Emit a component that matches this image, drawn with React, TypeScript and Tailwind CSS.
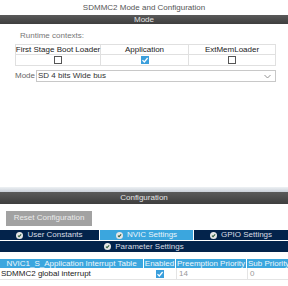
import React from 'react';

const CheckBox = ({ checked }: { checked?: boolean }) =>
  checked ? (
    <svg width="8" height="8" viewBox="0 0 8 8">
      <rect x="0" y="0" width="8" height="8" fill="#3b9fdc" />
      <path d="M1.5 4.2 L3.3 6 L6.6 2" fill="none" stroke="#fff" strokeWidth="1.2" />
    </svg>
  ) : (
    <svg width="8" height="8" viewBox="0 0 8 8">
      <rect x="0.5" y="0.5" width="7" height="7" fill="#fff" stroke="#555" strokeWidth="1" />
    </svg>
  );

const TabIcon = () => (
  <svg width="7" height="7" viewBox="0 0 8 8" className="mr-[4px] shrink-0">
    <circle cx="4" cy="4" r="4" fill="#e6e6e6" />
    <path d="M2.2 4.1 L3.5 5.4 L5.9 2.8" fill="none" stroke="#2f5d3a" strokeWidth="1.2" />
  </svg>
);

const Tab = ({ label, active, className = '' }: { label: string; active?: boolean; className?: string }) => (
  <div
    className={
      'flex items-center justify-center h-[10px] whitespace-nowrap ' +
      (active ? 'bg-[#3ba6de] text-[#e8f4fb] ' : 'bg-[#03234b] text-[#d8dde4] ') +
      className
    }
  >
    <TabIcon />
    {label}
  </div>
);

export default function App() {
  return (
    <div className="w-[288px] h-[286px] bg-white overflow-hidden flex flex-col font-['Liberation_Sans',Arial,sans-serif] text-[8px] leading-none whitespace-nowrap">
      {/* title */}
      <div className="h-[15px] flex items-center justify-center text-[#555]">SDMMC2 Mode and Configuration</div>
      <div className="h-[9px] bg-gradient-to-b from-[#5a5a5a] to-[#3e3e3e] text-[#e4e4e4] flex items-center justify-center">
        Mode
      </div>

      <div className="px-[15px] pt-[5px]">
        <div className="pl-[5px] text-[#777] h-[13px] flex items-center">Runtime contexts:</div>
        <div className="mt-[2px] w-[261px] border border-[#e0e0e0] grid grid-cols-[85px_88px_1fr] text-[#222]">
          <div className="h-[10px] flex items-center justify-center border-r border-b border-[#e0e0e0]">First Stage Boot Loader</div>
          <div className="h-[10px] flex items-center justify-center border-r border-b border-[#e0e0e0]">Application</div>
          <div className="h-[10px] flex items-center justify-center border-b border-[#e0e0e0]">ExtMemLoader</div>
          <div className="h-[10px] flex items-center justify-center border-r border-[#e0e0e0]"><CheckBox /></div>
          <div className="h-[10px] flex items-center justify-center border-r border-[#e0e0e0]"><CheckBox checked /></div>
          <div className="h-[10px] flex items-center justify-center"><CheckBox /></div>
        </div>
        <div className="mt-[4px] flex items-center w-[261px]">
          <span className="text-[#666] w-[21px]">Mode</span>
          <div className="flex-1 h-[12px] border border-[#c8c8c8] flex items-center justify-between px-[1px] text-[#333]">
            <span>SD 4 bits Wide bus</span>
            <svg width="7" height="5" viewBox="0 0 7 5" className="mr-[3px]">
              <path d="M0.5 1 L3.5 4 L6.5 1" fill="none" stroke="#888" strokeWidth="0.9" />
            </svg>
          </div>
        </div>
      </div>

      <div className="flex-1" />

      {/* configuration */}
      <div className="h-[5px] bg-gradient-to-b from-[#eef1f4] to-[#c9d0d8]" />
      <div className="h-[12px] bg-gradient-to-b from-[#5a5a5a] to-[#3e3e3e] text-[#e4e4e4] flex items-center justify-center">
        Configuration
      </div>
      <div className="h-[23px] flex items-center pl-[6px] pt-[5px]">
        <div className="w-[86px] h-[15px] bg-[#a2a2a2] text-[#ececec] flex items-center justify-center">Reset Configuration</div>
      </div>
      <div className="mt-[3px] flex gap-[1px]">
        <Tab label="User Constants" className="w-[99px]" />
        <Tab label="NVIC Settings" active className="w-[93px]" />
        <Tab label="GPIO Settings" className="flex-1" />
      </div>
      <div className="mt-[1px]">
        <Tab label="Parameter Settings" className="h-[11px]" />
      </div>
      <div className="mt-[7px] flex w-[300px]">
        <div className="w-[143px] h-[9px] bg-[#3ba6de] text-[#eef7fc] flex items-center justify-center mr-[1px]">NVIC1_S_Application Interrupt Table</div>
        <div className="w-[31px] h-[9px] bg-[#3ba6de] text-[#eef7fc] flex items-center justify-center mr-[1px]">Enabled</div>
        <div className="w-[70px] h-[9px] bg-[#3ba6de] text-[#eef7fc] flex items-center justify-center mr-[1px]">Preemption Priority</div>
        <div className="w-[50px] h-[9px] bg-[#3ba6de] text-[#eef7fc] flex items-center pl-[1px]">Sub Priority</div>
      </div>
      <div className="flex w-[300px] h-[12px] border-b border-[#e4e4e4] items-center">
        <div className="w-[144px] pl-[1px] text-[#222]">SDMMC2 global interrupt</div>
        <div className="w-[32px] flex justify-center"><CheckBox checked /></div>
        <div className="w-[71px] pl-[2px] text-[#999] border-l border-[#e4e4e4] h-full flex items-center">14</div>
        <div className="flex-1 pl-[2px] text-[#999] border-l border-[#e4e4e4] h-full flex items-center">0</div>
      </div>
      <div className="h-[6px]" />
    </div>
  );
}
